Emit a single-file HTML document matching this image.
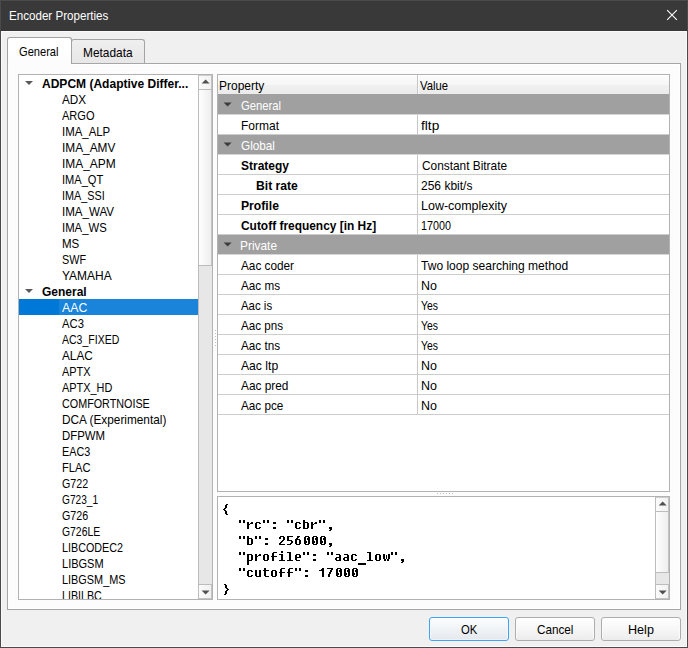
<!DOCTYPE html>
<html><head><meta charset="utf-8"><title>Encoder Properties</title>
<style>
html,body{margin:0;padding:0}
body{width:688px;height:648px;overflow:hidden;background:#f0f0f0;position:relative;font-family:"Liberation Sans",sans-serif}
div,span,svg{position:absolute;box-sizing:border-box}
.t{font:13px/16px "Liberation Sans",sans-serif;white-space:nowrap;transform-origin:0 0;color:#000}
.b{font-weight:bold}
#tb{left:0;top:0;width:688px;height:31px;background:#393939;border:1px solid #4b4b4b;border-bottom-color:#383838}
#wb{left:0;top:31px;width:688px;height:617px;border:1px solid #4a4a4a;border-top:none}
#wi{left:1px;top:31px;width:686px;height:616px;border:1px solid #fafafa}
#pane{left:7px;top:63px;width:674px;height:547px;border:1px solid #a6a6a6;background:#fcfcfc;box-shadow:inset 0 0 0 1px #fff}
#tab1{left:7px;top:37px;width:65px;height:27px;border:1px solid #a3a3a3;border-bottom:none;border-radius:3px 3px 0 0;background:linear-gradient(#fff 0%,#fff 45%,#fcfcfc 85%,#fcfcfc 100%)}
#tab2{left:71px;top:39px;width:74px;height:24px;border:1px solid #a3a3a3;border-bottom:none;border-radius:3px 3px 0 0;background:linear-gradient(#efefef,#e7e7e7)}
.box{border:1px solid #b2b2b2;background:#fff}
#tree{left:18px;top:74px;width:195px;height:526px}
#prop{left:217px;top:74px;width:453px;height:418px}
#json{left:217px;top:496px;width:453px;height:104px}
#sel{left:19px;top:299px;width:179px;height:16px;background:#0078d7}
#sel2{left:59px;top:299px;width:139px;height:16px;background:#1a84db}
.sb{width:14px;background:#e7e7e7;border-left:1px solid #bcbcbc}
.sbb{left:0;width:13px;border-right:1px solid #c2c2c2;height:15px;background:linear-gradient(90deg,#fbfbfb,#f1f1f1)}
.sbt{left:0;width:13px;border-right:1px solid #c2c2c2;background:linear-gradient(90deg,#fefefe,#eeeeee);border-bottom:1px solid #bcbcbc}
.up{top:0;border-bottom:1px solid #bcbcbc;border-top:1px solid #cdcdcd}
.dn{bottom:0;border-top:1px solid #bcbcbc;border-bottom:1px solid #c4c4c4}
#hdr{left:218px;top:75px;width:451px;height:19px;background:linear-gradient(#fff 0%,#fff 5%,#fbfbfb 6%,#f6f6f6 52%,#f0f0f0 55%,#ebebeb 100%)}
#hdrb{left:218px;top:94px;width:451px;height:1px;background:#a0a0a0}
.hd{top:75px;width:1px;height:19px;background:#c6c6c6}
.gr{left:218px;width:451px;height:19px;background:#a0a0a0}
.gl{left:218px;width:451px;height:1px;background:#cdcdcd}
.vl{left:417px;width:1px;background:#c8c8c8}
.btn{top:617px;width:80px;height:24px;border:1px solid #adadad;border-radius:3px;background:linear-gradient(#ffffff 0%,#f7f7f7 50%,#ececec 100%);box-shadow:inset 0 1px 0 #fff,inset 1px 0 0 #fbfbfb,inset -1px 0 0 #fbfbfb}
#ok{border-color:#3ea5f6;background:linear-gradient(#fdfeff 0%,#f0f3f6 50%,#e4e8ec 100%);box-shadow:inset 0 1px 0 #fff,inset 1px 0 0 #f4f9fd,inset -1px 0 0 #f4f9fd,inset 0 -1px 0 #eef2f6}
.dot{width:1px;height:1px;background:#bdbdbd}
.m{font:bold 13.333px/16px "Liberation Mono",monospace;white-space:pre;color:#000;left:222px;-webkit-text-stroke:0.12px #000}
#treeclip{left:0;top:0;width:198px;height:599px;overflow:hidden}
#tabfix{left:8px;top:64px;width:63px;height:1px;background:#fcfcfc}

</style></head><body>
<div id="tb"></div><div id="wb"></div><div id="wi"></div>
<svg style="left:660px;top:4px" width="24" height="24" viewBox="660 4 24 24"><path d="M667.15 10.15L676.85 19.85M676.85 10.15L667.15 19.85" stroke="#fff" stroke-width="1.1" fill="none"/></svg>
<div id="pane"></div>
<div id="tab2"></div><div id="tab1"></div><div id="tabfix"></div>
<div id="tree" class="box"></div>
<div id="prop" class="box"></div>
<div id="json" class="box"></div>
<div id="sel"></div><div id="sel2"></div>
<div class="sb" style="left:198px;top:75px;height:524px"><div class="sbb up"></div><div class="sbt" style="top:15px;height:176px"></div><div class="sbb dn"></div></div>
<div class="sb" style="left:655px;top:497px;height:102px"><div class="sbb up"></div><div class="sbt" style="top:15px;height:61px"></div><div class="sbb dn"></div></div>
<div id="hdr"></div><div id="hdrb"></div><div class="hd" style="left:417px"></div><div class="hd" style="left:418px;background:linear-gradient(#fff,#f8f8f8)"></div>
<div class="gr" style="top:95px"></div><div class="gl" style="top:114px;background:#d6d6d6"></div>
<div class="gl" style="top:134px"></div><div class="vl" style="top:115px;height:20px"></div>
<div class="gr" style="top:135px"></div><div class="gl" style="top:154px;background:#d6d6d6"></div>
<div class="gl" style="top:174px"></div><div class="vl" style="top:155px;height:20px"></div>
<div class="gl" style="top:194px"></div><div class="vl" style="top:175px;height:20px"></div>
<div class="gl" style="top:214px"></div><div class="vl" style="top:195px;height:20px"></div>
<div class="gl" style="top:234px"></div><div class="vl" style="top:215px;height:20px"></div>
<div class="gr" style="top:235px"></div><div class="gl" style="top:254px;background:#d6d6d6"></div>
<div class="gl" style="top:274px"></div><div class="vl" style="top:255px;height:20px"></div>
<div class="gl" style="top:294px"></div><div class="vl" style="top:275px;height:20px"></div>
<div class="gl" style="top:314px"></div><div class="vl" style="top:295px;height:20px"></div>
<div class="gl" style="top:334px"></div><div class="vl" style="top:315px;height:20px"></div>
<div class="gl" style="top:354px"></div><div class="vl" style="top:335px;height:20px"></div>
<div class="gl" style="top:374px"></div><div class="vl" style="top:355px;height:20px"></div>
<div class="gl" style="top:394px"></div><div class="vl" style="top:375px;height:20px"></div>
<div class="gl" style="top:414px"></div><div class="vl" style="top:395px;height:20px"></div>
<div class="dot" style="left:215px;top:330px"></div>
<div class="dot" style="left:215px;top:333px"></div>
<div class="dot" style="left:215px;top:336px"></div>
<div class="dot" style="left:215px;top:339px"></div>
<div class="dot" style="left:215px;top:342px"></div>
<div class="dot" style="left:215px;top:345px"></div>
<div class="dot" style="left:437px;top:493px"></div>
<div class="dot" style="left:440px;top:493px"></div>
<div class="dot" style="left:443px;top:493px"></div>
<div class="dot" style="left:446px;top:493px"></div>
<div class="dot" style="left:449px;top:493px"></div>
<div class="dot" style="left:452px;top:493px"></div>
<div class="btn" id="ok" style="left:429px"></div><div class="btn" style="left:515px"></div><div class="btn" style="left:601px"></div>
<svg style="left:0;top:0" width="688" height="648" viewBox="0 0 688 648">
<polygon points="25,81 33,81 29.0,85.0" fill="#5a5a5a"/>
<polygon points="25,289 33,289 29.0,293.0" fill="#5a5a5a"/>
<polygon points="223.6,102.4 231.6,102.4 227.6,106.4" fill="#3c3c3c"/>
<polygon points="223.6,142.4 231.6,142.4 227.6,146.4" fill="#3c3c3c"/>
<polygon points="223.6,242.4 231.6,242.4 227.6,246.4" fill="#3c3c3c"/>
<polygon points="201.6,83.4 209.6,83.4 205.6,79.4" fill="#505050"/>
<polygon points="201.6,590.5 209.6,590.5 205.6,594.5" fill="#505050"/>
<polygon points="658.7,505.4 666.7,505.4 662.7,501.4" fill="#505050"/>
<polygon points="658.7,590.5 666.7,590.5 662.7,594.5" fill="#505050"/>
<path d="M226 504h2v1h-2zM225 505h2v1h-2zM225 506h2v1h-2zM225 507h2v1h-2zM224 508h2v1h-2zM223 509h2v1h-2zM224 510h2v1h-2zM225 511h2v1h-2zM225 512h2v1h-2zM225 513h2v1h-2zM226 514h2v1h-2zM239 520h2v1h-2zM243 520h2v1h-2zM263 520h2v1h-2zM267 520h2v1h-2zM287 520h2v1h-2zM291 520h2v1h-2zM303 520h2v1h-2zM319 520h2v1h-2zM323 520h2v1h-2zM239 521h2v1h-2zM243 521h2v1h-2zM263 521h2v1h-2zM267 521h2v1h-2zM287 521h2v1h-2zM291 521h2v1h-2zM303 521h2v1h-2zM319 521h2v1h-2zM323 521h2v1h-2zM239 522h2v1h-2zM243 522h2v1h-2zM247 522h2v1h-2zM251 522h2v1h-2zM256 522h4v1h-4zM263 522h2v1h-2zM267 522h2v1h-2zM273 522h3v1h-3zM287 522h2v1h-2zM291 522h2v1h-2zM296 522h4v1h-4zM303 522h5v1h-5zM311 522h2v1h-2zM315 522h2v1h-2zM319 522h2v1h-2zM323 522h2v1h-2zM247 523h2v1h-2zM250 523h3v1h-3zM255 523h2v1h-2zM259 523h2v1h-2zM273 523h3v1h-3zM295 523h2v1h-2zM299 523h2v1h-2zM303 523h2v1h-2zM307 523h2v1h-2zM311 523h2v1h-2zM314 523h3v1h-3zM247 524h3v1h-3zM255 524h2v1h-2zM295 524h2v1h-2zM303 524h2v1h-2zM307 524h2v1h-2zM311 524h3v1h-3zM247 525h2v1h-2zM255 525h2v1h-2zM295 525h2v1h-2zM303 525h2v1h-2zM307 525h2v1h-2zM311 525h2v1h-2zM247 526h2v1h-2zM255 526h2v1h-2zM295 526h2v1h-2zM303 526h2v1h-2zM307 526h2v1h-2zM311 526h2v1h-2zM247 527h2v1h-2zM255 527h2v1h-2zM259 527h2v1h-2zM273 527h3v1h-3zM295 527h2v1h-2zM299 527h2v1h-2zM303 527h2v1h-2zM307 527h2v1h-2zM311 527h2v1h-2zM329 527h3v1h-3zM247 528h2v1h-2zM256 528h4v1h-4zM273 528h3v1h-3zM296 528h4v1h-4zM303 528h5v1h-5zM311 528h2v1h-2zM329 528h3v1h-3zM330 529h2v1h-2zM329 530h2v1h-2zM239 536h2v1h-2zM243 536h2v1h-2zM247 536h2v1h-2zM255 536h2v1h-2zM259 536h2v1h-2zM280 536h4v1h-4zM287 536h6v1h-6zM297 536h3v1h-3zM305 536h4v1h-4zM313 536h4v1h-4zM321 536h4v1h-4zM239 537h2v1h-2zM243 537h2v1h-2zM247 537h2v1h-2zM255 537h2v1h-2zM259 537h2v1h-2zM279 537h2v1h-2zM283 537h2v1h-2zM287 537h2v1h-2zM297 537h2v1h-2zM304 537h2v1h-2zM308 537h2v1h-2zM312 537h2v1h-2zM316 537h2v1h-2zM320 537h2v1h-2zM324 537h2v1h-2zM239 538h2v1h-2zM243 538h2v1h-2zM247 538h5v1h-5zM255 538h2v1h-2zM259 538h2v1h-2zM265 538h3v1h-3zM279 538h2v1h-2zM283 538h2v1h-2zM287 538h2v1h-2zM296 538h2v1h-2zM304 538h2v1h-2zM307 538h3v1h-3zM312 538h2v1h-2zM315 538h3v1h-3zM320 538h2v1h-2zM323 538h3v1h-3zM247 539h2v1h-2zM251 539h2v1h-2zM265 539h3v1h-3zM283 539h2v1h-2zM287 539h2v1h-2zM295 539h5v1h-5zM304 539h2v1h-2zM307 539h3v1h-3zM312 539h2v1h-2zM315 539h3v1h-3zM320 539h2v1h-2zM323 539h3v1h-3zM247 540h2v1h-2zM251 540h2v1h-2zM282 540h2v1h-2zM287 540h5v1h-5zM295 540h2v1h-2zM299 540h2v1h-2zM304 540h2v1h-2zM308 540h2v1h-2zM312 540h2v1h-2zM316 540h2v1h-2zM320 540h2v1h-2zM324 540h2v1h-2zM247 541h2v1h-2zM251 541h2v1h-2zM281 541h2v1h-2zM291 541h2v1h-2zM295 541h2v1h-2zM299 541h2v1h-2zM304 541h3v1h-3zM308 541h2v1h-2zM312 541h3v1h-3zM316 541h2v1h-2zM320 541h3v1h-3zM324 541h2v1h-2zM247 542h2v1h-2zM251 542h2v1h-2zM280 542h2v1h-2zM291 542h2v1h-2zM295 542h2v1h-2zM299 542h2v1h-2zM304 542h3v1h-3zM308 542h2v1h-2zM312 542h3v1h-3zM316 542h2v1h-2zM320 542h3v1h-3zM324 542h2v1h-2zM247 543h2v1h-2zM251 543h2v1h-2zM265 543h3v1h-3zM279 543h2v1h-2zM290 543h2v1h-2zM295 543h2v1h-2zM299 543h2v1h-2zM304 543h2v1h-2zM308 543h2v1h-2zM312 543h2v1h-2zM316 543h2v1h-2zM320 543h2v1h-2zM324 543h2v1h-2zM329 543h3v1h-3zM247 544h5v1h-5zM265 544h3v1h-3zM279 544h6v1h-6zM287 544h4v1h-4zM296 544h4v1h-4zM305 544h4v1h-4zM313 544h4v1h-4zM321 544h4v1h-4zM329 544h3v1h-3zM330 545h2v1h-2zM329 546h2v1h-2zM281 551h2v1h-2zM239 552h2v1h-2zM243 552h2v1h-2zM273 552h4v1h-4zM281 552h2v1h-2zM287 552h4v1h-4zM303 552h2v1h-2zM307 552h2v1h-2zM327 552h2v1h-2zM331 552h2v1h-2zM367 552h4v1h-4zM391 552h2v1h-2zM395 552h2v1h-2zM239 553h2v1h-2zM243 553h2v1h-2zM272 553h2v1h-2zM289 553h2v1h-2zM303 553h2v1h-2zM307 553h2v1h-2zM327 553h2v1h-2zM331 553h2v1h-2zM369 553h2v1h-2zM391 553h2v1h-2zM395 553h2v1h-2zM239 554h2v1h-2zM243 554h2v1h-2zM247 554h5v1h-5zM255 554h2v1h-2zM259 554h2v1h-2zM264 554h4v1h-4zM272 554h2v1h-2zM279 554h4v1h-4zM289 554h2v1h-2zM296 554h4v1h-4zM303 554h2v1h-2zM307 554h2v1h-2zM313 554h3v1h-3zM327 554h2v1h-2zM331 554h2v1h-2zM336 554h4v1h-4zM344 554h4v1h-4zM352 554h4v1h-4zM369 554h2v1h-2zM376 554h4v1h-4zM383 554h2v1h-2zM388 554h2v1h-2zM391 554h2v1h-2zM395 554h2v1h-2zM247 555h2v1h-2zM251 555h2v1h-2zM255 555h2v1h-2zM258 555h3v1h-3zM263 555h2v1h-2zM267 555h2v1h-2zM272 555h2v1h-2zM281 555h2v1h-2zM289 555h2v1h-2zM295 555h2v1h-2zM299 555h2v1h-2zM313 555h3v1h-3zM339 555h2v1h-2zM347 555h2v1h-2zM351 555h2v1h-2zM355 555h2v1h-2zM369 555h2v1h-2zM375 555h2v1h-2zM379 555h2v1h-2zM383 555h2v1h-2zM386 555h1v1h-1zM388 555h2v1h-2zM247 556h2v1h-2zM251 556h2v1h-2zM255 556h3v1h-3zM263 556h2v1h-2zM267 556h2v1h-2zM271 556h6v1h-6zM281 556h2v1h-2zM289 556h2v1h-2zM295 556h2v1h-2zM299 556h2v1h-2zM339 556h2v1h-2zM347 556h2v1h-2zM351 556h2v1h-2zM369 556h2v1h-2zM375 556h2v1h-2zM379 556h2v1h-2zM383 556h2v1h-2zM386 556h1v1h-1zM388 556h2v1h-2zM247 557h2v1h-2zM251 557h2v1h-2zM255 557h2v1h-2zM263 557h2v1h-2zM267 557h2v1h-2zM272 557h2v1h-2zM281 557h2v1h-2zM289 557h2v1h-2zM295 557h6v1h-6zM336 557h5v1h-5zM344 557h5v1h-5zM351 557h2v1h-2zM369 557h2v1h-2zM375 557h2v1h-2zM379 557h2v1h-2zM383 557h2v1h-2zM386 557h1v1h-1zM388 557h2v1h-2zM247 558h2v1h-2zM251 558h2v1h-2zM255 558h2v1h-2zM263 558h2v1h-2zM267 558h2v1h-2zM272 558h2v1h-2zM281 558h2v1h-2zM289 558h2v1h-2zM295 558h2v1h-2zM335 558h2v1h-2zM339 558h2v1h-2zM343 558h2v1h-2zM347 558h2v1h-2zM351 558h2v1h-2zM369 558h2v1h-2zM375 558h2v1h-2zM379 558h2v1h-2zM383 558h2v1h-2zM386 558h1v1h-1zM388 558h2v1h-2zM247 559h2v1h-2zM251 559h2v1h-2zM255 559h2v1h-2zM263 559h2v1h-2zM267 559h2v1h-2zM272 559h2v1h-2zM281 559h2v1h-2zM289 559h2v1h-2zM295 559h2v1h-2zM313 559h3v1h-3zM335 559h2v1h-2zM339 559h2v1h-2zM343 559h2v1h-2zM347 559h2v1h-2zM351 559h2v1h-2zM355 559h2v1h-2zM369 559h2v1h-2zM375 559h2v1h-2zM379 559h2v1h-2zM384 559h2v1h-2zM387 559h2v1h-2zM401 559h3v1h-3zM247 560h5v1h-5zM255 560h2v1h-2zM264 560h4v1h-4zM272 560h2v1h-2zM279 560h6v1h-6zM287 560h6v1h-6zM296 560h4v1h-4zM313 560h3v1h-3zM336 560h5v1h-5zM344 560h5v1h-5zM352 560h4v1h-4zM367 560h6v1h-6zM376 560h4v1h-4zM384 560h2v1h-2zM387 560h2v1h-2zM401 560h3v1h-3zM247 561h2v1h-2zM402 561h2v1h-2zM247 562h2v1h-2zM401 562h2v1h-2zM247 563h2v1h-2zM358 563h8v1h-8zM247 564h2v1h-2zM358 564h8v1h-8zM239 568h2v1h-2zM243 568h2v1h-2zM264 568h2v1h-2zM281 568h4v1h-4zM289 568h4v1h-4zM295 568h2v1h-2zM299 568h2v1h-2zM322 568h2v1h-2zM327 568h6v1h-6zM337 568h4v1h-4zM345 568h4v1h-4zM353 568h4v1h-4zM239 569h2v1h-2zM243 569h2v1h-2zM264 569h2v1h-2zM280 569h2v1h-2zM288 569h2v1h-2zM295 569h2v1h-2zM299 569h2v1h-2zM321 569h3v1h-3zM331 569h2v1h-2zM336 569h2v1h-2zM340 569h2v1h-2zM344 569h2v1h-2zM348 569h2v1h-2zM352 569h2v1h-2zM356 569h2v1h-2zM239 570h2v1h-2zM243 570h2v1h-2zM248 570h4v1h-4zM255 570h2v1h-2zM259 570h2v1h-2zM263 570h6v1h-6zM272 570h4v1h-4zM280 570h2v1h-2zM288 570h2v1h-2zM295 570h2v1h-2zM299 570h2v1h-2zM305 570h3v1h-3zM319 570h5v1h-5zM330 570h2v1h-2zM336 570h2v1h-2zM339 570h3v1h-3zM344 570h2v1h-2zM347 570h3v1h-3zM352 570h2v1h-2zM355 570h3v1h-3zM247 571h2v1h-2zM251 571h2v1h-2zM255 571h2v1h-2zM259 571h2v1h-2zM264 571h2v1h-2zM271 571h2v1h-2zM275 571h2v1h-2zM280 571h2v1h-2zM288 571h2v1h-2zM305 571h3v1h-3zM322 571h2v1h-2zM330 571h2v1h-2zM336 571h2v1h-2zM339 571h3v1h-3zM344 571h2v1h-2zM347 571h3v1h-3zM352 571h2v1h-2zM355 571h3v1h-3zM247 572h2v1h-2zM255 572h2v1h-2zM259 572h2v1h-2zM264 572h2v1h-2zM271 572h2v1h-2zM275 572h2v1h-2zM279 572h6v1h-6zM287 572h6v1h-6zM322 572h2v1h-2zM329 572h2v1h-2zM336 572h2v1h-2zM340 572h2v1h-2zM344 572h2v1h-2zM348 572h2v1h-2zM352 572h2v1h-2zM356 572h2v1h-2zM247 573h2v1h-2zM255 573h2v1h-2zM259 573h2v1h-2zM264 573h2v1h-2zM271 573h2v1h-2zM275 573h2v1h-2zM280 573h2v1h-2zM288 573h2v1h-2zM322 573h2v1h-2zM329 573h2v1h-2zM336 573h3v1h-3zM340 573h2v1h-2zM344 573h3v1h-3zM348 573h2v1h-2zM352 573h3v1h-3zM356 573h2v1h-2zM247 574h2v1h-2zM255 574h2v1h-2zM259 574h2v1h-2zM264 574h2v1h-2zM271 574h2v1h-2zM275 574h2v1h-2zM280 574h2v1h-2zM288 574h2v1h-2zM322 574h2v1h-2zM328 574h2v1h-2zM336 574h3v1h-3zM340 574h2v1h-2zM344 574h3v1h-3zM348 574h2v1h-2zM352 574h3v1h-3zM356 574h2v1h-2zM247 575h2v1h-2zM251 575h2v1h-2zM255 575h2v1h-2zM259 575h2v1h-2zM264 575h2v1h-2zM271 575h2v1h-2zM275 575h2v1h-2zM280 575h2v1h-2zM288 575h2v1h-2zM305 575h3v1h-3zM322 575h2v1h-2zM328 575h2v1h-2zM336 575h2v1h-2zM340 575h2v1h-2zM344 575h2v1h-2zM348 575h2v1h-2zM352 575h2v1h-2zM356 575h2v1h-2zM248 576h4v1h-4zM256 576h5v1h-5zM265 576h4v1h-4zM272 576h4v1h-4zM280 576h2v1h-2zM288 576h2v1h-2zM305 576h3v1h-3zM322 576h2v1h-2zM328 576h2v1h-2zM337 576h4v1h-4zM345 576h4v1h-4zM353 576h4v1h-4zM224 584h2v1h-2zM225 585h2v1h-2zM225 586h2v1h-2zM225 587h2v1h-2zM226 588h2v1h-2zM227 589h2v1h-2zM226 590h2v1h-2zM225 591h2v1h-2zM225 592h2v1h-2zM225 593h2v1h-2zM224 594h2v1h-2z" fill="#000" shape-rendering="crispEdges"/>
</svg>
<div id="treeclip"><span class="t b" style="left:41.83px;top:76px;transform:scaleX(0.9247)">ADPCM (Adaptive Differ...</span>
<span class="t" style="left:61.77px;top:92px;transform:scaleX(0.9022)">ADX</span>
<span class="t" style="left:61.76px;top:108px;transform:scaleX(0.8502)">ARGO</span>
<span class="t" style="left:62.07px;top:124px;transform:scaleX(0.8784)">IMA_ALP</span>
<span class="t" style="left:62.02px;top:140px;transform:scaleX(0.9131)">IMA_AMV</span>
<span class="t" style="left:62.01px;top:156px;transform:scaleX(0.9177)">IMA_APM</span>
<span class="t" style="left:62.10px;top:172px;transform:scaleX(0.8514)">IMA_QT</span>
<span class="t" style="left:62.13px;top:188px;transform:scaleX(0.8325)">IMA_SSI</span>
<span class="t" style="left:62.06px;top:204px;transform:scaleX(0.8903)">IMA_WAV</span>
<span class="t" style="left:62.09px;top:220px;transform:scaleX(0.8713)">IMA_WS</span>
<span class="t" style="left:62.29px;top:236px;transform:scaleX(0.8854)">MS</span>
<span class="t" style="left:61.57px;top:252px;transform:scaleX(0.8306)">SWF</span>
<span class="t" style="left:62.17px;top:268px;transform:scaleX(0.9207)">YAMAHA</span>
<span class="t b" style="left:42.22px;top:284px;transform:scaleX(0.9230)">General</span>
<span class="t" style="left:61.76px;top:300px;transform:scaleX(0.9446);color:#fff">AAC</span>
<span class="t" style="left:61.77px;top:316px;transform:scaleX(0.8680)">AC3</span>
<span class="t" style="left:61.74px;top:332px;transform:scaleX(0.8096)">AC3_FIXED</span>
<span class="t" style="left:61.77px;top:348px;transform:scaleX(0.9078)">ALAC</span>
<span class="t" style="left:61.75px;top:364px;transform:scaleX(0.8401)">APTX</span>
<span class="t" style="left:61.76px;top:380px;transform:scaleX(0.8391)">APTX_HD</span>
<span class="t" style="left:61.94px;top:396px;transform:scaleX(0.8289)">COMFORTNOISE</span>
<span class="t" style="left:62.20px;top:412px;transform:scaleX(0.9083)">DCA (Experimental)</span>
<span class="t" style="left:62.27px;top:428px;transform:scaleX(0.8763)">DFPWM</span>
<span class="t" style="left:62.36px;top:444px;transform:scaleX(0.8313)">EAC3</span>
<span class="t" style="left:62.31px;top:460px;transform:scaleX(0.8571)">FLAC</span>
<span class="t" style="left:61.95px;top:476px;transform:scaleX(0.8210)">G722</span>
<span class="t" style="left:61.96px;top:492px;transform:scaleX(0.7797)">G723_1</span>
<span class="t" style="left:61.95px;top:508px;transform:scaleX(0.8241)">G726</span>
<span class="t" style="left:61.96px;top:524px;transform:scaleX(0.7989)">G726LE</span>
<span class="t" style="left:62.36px;top:540px;transform:scaleX(0.8267)">LIBCODEC2</span>
<span class="t" style="left:62.32px;top:556px;transform:scaleX(0.8481)">LIBGSM</span>
<span class="t" style="left:62.35px;top:572px;transform:scaleX(0.8373)">LIBGSM_MS</span>
<span class="t" style="left:62.18px;top:588px;transform:scaleX(0.8230)">LIBILBC</span></div>
<span class="t" style="left:8.79px;top:8px;transform:scaleX(0.8926);color:#fff">Encoder Properties</span>
<span class="t" style="left:19.35px;top:44px;transform:scaleX(0.8541)">General</span>
<span class="t" style="left:82.71px;top:45px;transform:scaleX(0.9140)">Metadata</span>
<span class="t" style="left:219.25px;top:78px;transform:scaleX(0.9216)">Property</span>
<span class="t" style="left:420.42px;top:78px;transform:scaleX(0.8685)">Value</span>
<span class="t" style="left:241.25px;top:98px;transform:scaleX(0.8655);color:#fff">General</span>
<span class="t" style="left:240.90px;top:118px;transform:scaleX(0.9223)">Format</span>
<span class="t" style="left:421.11px;top:118px;transform:scaleX(1.0536)">fltp</span>
<span class="t" style="left:241.23px;top:138px;transform:scaleX(0.9036);color:#fff">Global</span>
<span class="t b" style="left:240.80px;top:158px;transform:scaleX(0.9223)">Strategy</span>
<span class="t" style="left:421.52px;top:158px;transform:scaleX(0.9125)">Constant Bitrate</span>
<span class="t b" style="left:256.02px;top:178px;transform:scaleX(0.9338)">Bit rate</span>
<span class="t" style="left:421.02px;top:178px;transform:scaleX(0.9245)">256 kbit/s</span>
<span class="t b" style="left:240.74px;top:198px;transform:scaleX(0.9370)">Profile</span>
<span class="t" style="left:420.66px;top:198px;transform:scaleX(0.9597)">Low-complexity</span>
<span class="t b" style="left:241.22px;top:218px;transform:scaleX(0.9174)">Cutoff frequency [in Hz]</span>
<span class="t" style="left:421.08px;top:218px;transform:scaleX(0.8298)">17000</span>
<span class="t" style="left:240.31px;top:238px;transform:scaleX(0.9155);color:#fff">Private</span>
<span class="t" style="left:241.43px;top:258px;transform:scaleX(0.9058)">Aac coder</span>
<span class="t" style="left:421.24px;top:258px;transform:scaleX(0.9262)">Two loop searching method</span>
<span class="t" style="left:241.43px;top:278px;transform:scaleX(0.9001)">Aac ms</span>
<span class="t" style="left:421.11px;top:278px;transform:scaleX(0.9596)">No</span>
<span class="t" style="left:241.43px;top:298px;transform:scaleX(0.8783)">Aac is</span>
<span class="t" style="left:421.21px;top:298px;transform:scaleX(0.8008)">Yes</span>
<span class="t" style="left:241.43px;top:318px;transform:scaleX(0.8942)">Aac pns</span>
<span class="t" style="left:421.21px;top:318px;transform:scaleX(0.8008)">Yes</span>
<span class="t" style="left:241.43px;top:338px;transform:scaleX(0.8999)">Aac tns</span>
<span class="t" style="left:421.21px;top:338px;transform:scaleX(0.8008)">Yes</span>
<span class="t" style="left:241.44px;top:358px;transform:scaleX(0.9352)">Aac ltp</span>
<span class="t" style="left:421.11px;top:358px;transform:scaleX(0.9596)">No</span>
<span class="t" style="left:241.43px;top:378px;transform:scaleX(0.9103)">Aac pred</span>
<span class="t" style="left:421.11px;top:378px;transform:scaleX(0.9596)">No</span>
<span class="t" style="left:241.43px;top:398px;transform:scaleX(0.9023)">Aac pce</span>
<span class="t" style="left:421.11px;top:398px;transform:scaleX(0.9596)">No</span>
<span class="t" style="left:461.17px;top:622px;transform:scaleX(0.8640)">OK</span>
<span class="t" style="left:537.08px;top:622px;transform:scaleX(0.9000)">Cancel</span>
<span class="t" style="left:627.59px;top:622px;transform:scaleX(0.9679)">Help</span>

</body></html>
